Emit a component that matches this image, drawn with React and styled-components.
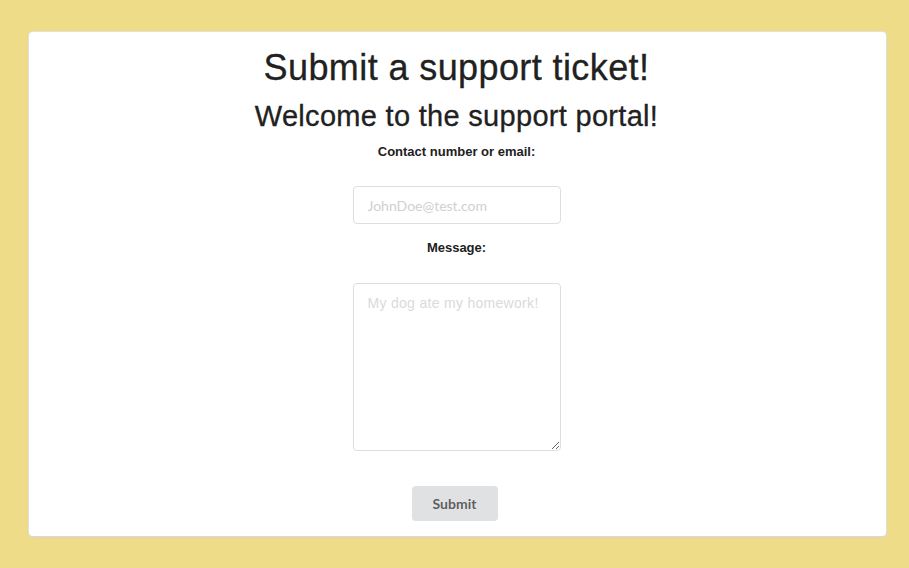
import React from 'react';
import styled, { createGlobalStyle } from 'styled-components';

const GlobalStyle = createGlobalStyle`
  html, body {
    margin: 0;
    padding: 0;
    background: #efdc88;
  }
  body {
    font-family: 'Liberation Sans', Arial, sans-serif;
  }
`;

const Page = styled.div`
  padding: 32px 23px 32px 29px;
`;

const Card = styled.form`
  display: flex;
  flex-direction: column;
  align-items: center;
  height: 504px;
  box-sizing: border-box;
  padding: 15px 2px 0 0;
  background: #fff;
  border-radius: 4px;
  box-shadow: 0 1px 3px 0 #d4d4d5, 0 0 0 1px #e6e3d6;
`;

const Title = styled.h1`
  margin: 0;
  color: #212121;
  font-size: 36px;
  font-weight: 400;
  line-height: 41px;
  letter-spacing: 0.4px;
  -webkit-text-stroke: 0.3px #212121;
`;

const Subtitle = styled.h2`
  margin: 12px 0 0;
  color: #212121;
  font-size: 29px;
  font-weight: 400;
  line-height: 32px;
  letter-spacing: 0.3px;
  -webkit-text-stroke: 0.3px #212121;
`;

const Label = styled.label`
  display: block;
  margin-top: ${p => p.gap}px;
  color: #212121;
  font-size: 13px;
  font-weight: 700;
  line-height: 15px;
`;

const Input = styled.input`
  box-sizing: border-box;
  width: 208px;
  height: 38px;
  margin-top: 27px;
  padding: 0 14px;
  border: 1px solid #dedede;
  border-radius: 4px;
  font-family: 'Lato', sans-serif;
  font-size: 14px;
  outline: none;

  &::placeholder {
    color: #d0d0d0;
  }
`;

const TextArea = styled.textarea`
  box-sizing: border-box;
  width: 208px;
  height: 168px;
  margin-top: 28px;
  padding: 10px 14px;
  border: 1px solid #dedede;
  border-radius: 4px;
  font-family: 'Liberation Sans', Arial, sans-serif;
  font-size: 14px;
  line-height: 19px;
  letter-spacing: 0.3px;
  outline: none;

  &::placeholder {
    color: #dadada;
  }
`;

const Button = styled.button`
  width: 86px;
  height: 35px;
  margin: 35px 4px 0 0;
  border: 0;
  border-radius: 4px;
  background: #e0e1e2;
  color: rgba(0, 0, 0, 0.6);
  font-family: 'Lato', sans-serif;
  font-size: 14px;
  font-weight: 700;
  cursor: pointer;
`;

const App = () => {
  return (
    <Page>
      <GlobalStyle />
      <Card onSubmit={e => e.preventDefault()}>
        <Title>Submit a support ticket!</Title>
        <Subtitle>Welcome to the support portal!</Subtitle>
        <Label gap={12}>Contact number or email:</Label>
        <Input placeholder="JohnDoe@test.com" />
        <Label gap={16}>Message:</Label>
        <TextArea placeholder="My dog ate my homework!" />
        <Button type="submit">Submit</Button>
      </Card>
    </Page>
  );
};

export default App;
